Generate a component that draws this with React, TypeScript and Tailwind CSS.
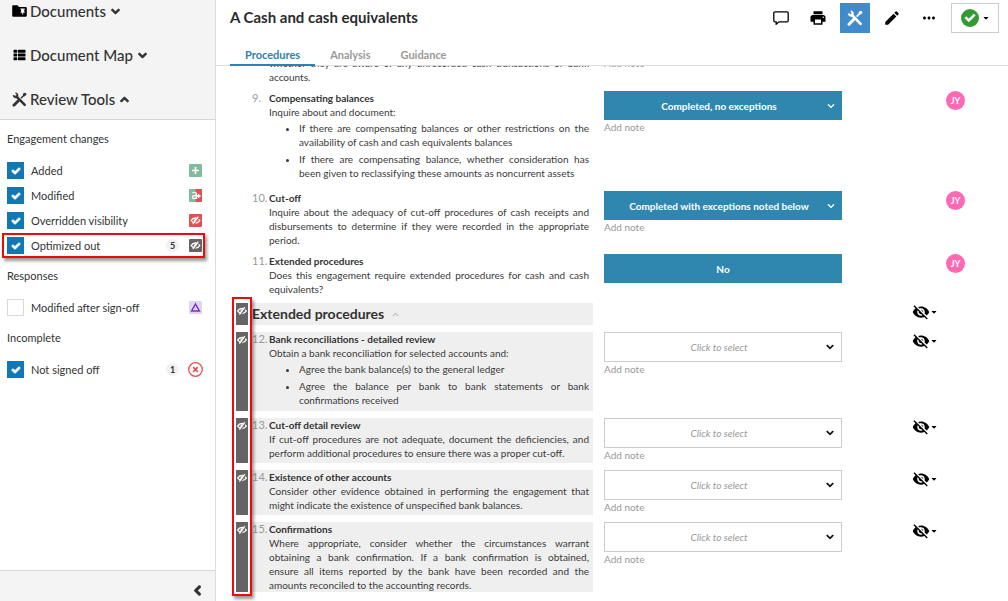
import React from "react";
import { FaCheck, FaChevronDown, FaChevronUp, FaChevronLeft, FaThList, FaCaretDown } from "react-icons/fa";
import { MdPrint, MdEdit, MdVisibilityOff, MdMoreHoriz } from "react-icons/md";

function ToolsIcon({ className }: { className?: string }) {
  return (
    <svg viewBox="0 0 16 16" className={className} fill="none" stroke="currentColor" aria-hidden="true">
      <path d="M4.6 4.6 L13.6 13.8" strokeWidth="2.6" strokeLinecap="round" />
      <path d="M1.6 3.4 A3 3 0 0 0 4.4 5.9 A2.6 2.6 0 0 0 5.9 3.2 A3 3 0 0 0 3.8 1.1" strokeWidth="1.8" />
      <path d="M14.8 1.4 L9.6 6.6" strokeWidth="1.6" />
      <path d="M15.2 2.4 L12.6 4.2 M13.4 1 L12 3.4" strokeWidth="1.4" />
      <path d="M6.8 9.4 L2 14.2" strokeWidth="3" strokeLinecap="round" />
    </svg>
  );
}

function FolderPinIcon({ className }: { className?: string }) {
  return (
    <svg viewBox="0 0 15 12" className={className} aria-hidden="true">
      <path d="M1.4 .3H5.600L7 1.900H13.600A1.200 1.200 0 0 1 14.800 3.100V10.500A1.200 1.200 0 0 1 13.600 11.700H1.400A1.200 1.200 0 0 1 .2 10.500V1.500A1.200 1.200 0 0 1 1.400 .3Z" fill="currentColor" />
      <path d="M8.400 3.400H12.800V4.400H12.300V6.800L13.200 7.800H11.200V9.600H10.200V7.800H8.200L9 6.800V4.400H8.400Z" fill="#f4f4f4" />
    </svg>
  );
}

function EyeSlashIcon({ className }: { className?: string }) {
  return (
    <svg viewBox="0 0 12 12" className={className} fill="none" aria-hidden="true">
      <path d="M1.700 6C2.700 4.300 4.200 3.500 6 3.500s3.300.8 4.300 2.500C9.300 7.700 7.800 8.500 6 8.500S2.700 7.700 1.700 6z" stroke="currentColor" strokeWidth="1.400" />
      <circle cx="6" cy="6" r="1.600" fill="currentColor" />
      <path d="M9.500 3 4.700 9.700" stroke="#646464" strokeWidth="1.300" />
      <path d="M8.800 2.200 3.400 9.700" stroke="currentColor" strokeWidth="1.200" />
    </svg>
  );
}

function Badge({ kind }: { kind: string }) {
  if (kind === "added")
    return (
      <svg viewBox="0 0 13 13" className="size-[13px]" aria-hidden="true">
        <rect width="13" height="13" rx="1" fill="#80bb9c" />
        <path d="M6.500 3v7M3 6.500h7" stroke="#fff" strokeWidth="1.700" />
      </svg>
    );
  if (kind === "modified")
    return (
      <svg viewBox="0 0 13 13" className="size-[13px]" aria-hidden="true">
        <rect width="13" height="13" rx="1" fill="#80bb9c" />
        <path d="M6.500 0H12a1 1 0 0 1 1 1v11a1 1 0 0 1-1 1H6.500z" fill="#e05252" />
        <path d="M3.400 4C4.600 3 7.400 3 7.400 5.200V10M7.400 6.600C5 6.400 3.400 7 3.400 8.300 3.400 10 6.400 10 7.400 8.400" stroke="#fff" strokeWidth="1.400" fill="none" />
        <path d="M7.400 7h4.200M9.600 5v4" stroke="#fff" strokeWidth="1.300" />
      </svg>
    );
  if (kind === "overridden" || kind === "optimized")
    return (
      <svg viewBox="0 0 13 13" className="size-[13px]" aria-hidden="true">
        <rect width="13" height="13" rx="1" fill={kind === "overridden" ? "#e05252" : "#646464"} />
        <path d="M2.200 6.500C3.200 4.800 4.700 4 6.500 4s3.300.8 4.300 2.500C9.800 8.200 8.300 9 6.500 9S3.200 8.200 2.200 6.500z" stroke="#fff" strokeWidth="1.400" fill="none" />
        <circle cx="6.500" cy="6.500" r="1.600" fill="#fff" />
        <path d="M10 3.500 5.200 10.200" stroke={kind === "overridden" ? "#e05252" : "#646464"} strokeWidth="1.300" />
        <path d="M9.300 2.700 3.900 10.200" stroke="#fff" strokeWidth="1.200" />
      </svg>
    );
  if (kind === "signoff")
    return (
      <svg viewBox="0 0 13 13" className="size-[13px]" aria-hidden="true">
        <rect width="13" height="13" rx="1" fill="#e3d3f4" />
        <path d="M6.500 3 10.400 10H2.600z" stroke="#7a35c0" strokeWidth="1.500" fill="none" />
      </svg>
    );
  return (
    <svg viewBox="0 0 15 15" className="-mx-px size-[15px]" fill="none" stroke="#e05252" aria-hidden="true">
      <circle cx="7.500" cy="7.500" r="6.800" strokeWidth="1.300" />
      <path d="M5.200 5.200l4.600 4.600M9.800 5.200 5.200 9.800" strokeWidth="1.700" />
    </svg>
  );
}

type Filter = { id: string; label: string; checked: boolean; count?: number; outlined?: boolean };

const filterGroups: { title: string; items: Filter[] }[] = [
  {
    title: "Engagement changes",
    items: [
      { id: "added", label: "Added", checked: true },
      { id: "modified", label: "Modified", checked: true },
      { id: "overridden", label: "Overridden visibility", checked: true },
      { id: "optimized", label: "Optimized out", checked: true, count: 5, outlined: true },
    ],
  },
  { title: "Responses", items: [{ id: "signoff", label: "Modified after sign-off", checked: false }] },
  { title: "Incomplete", items: [{ id: "unsigned", label: "Not signed off", checked: true, count: 1 }] },
];

function FilterRow({ item }: { item: Filter }) {
  return (
    <div className="relative flex h-[25px] items-center pr-[13px] pl-[7px]">
      <span className="grid size-[17px] place-items-center">
        <input
          id={item.id}
          type="checkbox"
          defaultChecked={item.checked}
          className="peer col-start-1 row-start-1 size-[17px] appearance-none border border-[#d9d9d9] bg-white checked:border-[#1079b5] checked:bg-[#1079b5]"
        />
        <FaCheck className="pointer-events-none z-10 col-start-1 row-start-1 hidden size-2 overflow-visible text-white [stroke-width:70] peer-checked:block" />
      </span>
      <label htmlFor={item.id} className="ml-[7px] flex-1">
        {item.label}
      </label>
      {item.count !== undefined && (
        <span className="mr-[10px] grid size-[13px] place-items-center rounded-full bg-[#f1f1f1] text-[9px] leading-none font-bold">
          {item.count}
        </span>
      )}
      <Badge kind={item.id} />
      {item.outlined && (
        <span className="pointer-events-none absolute inset-y-0 right-[10px] left-[2px] border-2 border-[#ee0a0a] shadow-[2px_3px_3px_rgba(0,0,0,0.4)]" />
      )}
    </div>
  );
}

function Sidebar() {
  return (
    <aside className="flex w-[216px] shrink-0 flex-col border-r border-[#dcdcdc] bg-white text-[#333]">
      <nav className="flex flex-col gap-[22px] border-b border-[#d6d6d6] bg-[#f4f4f4] pb-[9px] pl-3 text-[15px] font-medium">
        <button className="flex h-[22px] items-center">
          <FolderPinIcon className="mr-[3px] h-3 w-[15px] text-black" />
          Documents
          <FaChevronDown className="ml-[5px] size-[9px] overflow-visible [stroke-width:60]" />
        </button>
        <button className="flex h-[22px] items-center">
          <FaThList className="mr-[3px] h-3 w-[15px] text-black" />
          Document Map
          <FaChevronDown className="ml-[5px] size-[9px] overflow-visible [stroke-width:60]" />
        </button>
        <button className="flex h-[22px] items-center">
          <ToolsIcon className="mr-[3px] size-[15px]" />
          Review Tools
          <FaChevronUp className="ml-[5px] size-[9px] overflow-visible [stroke-width:60]" />
        </button>
      </nav>
      <div className="flex-1 pt-[10px] text-[11px] leading-[18px]">
        {filterGroups.map((g) => (
          <fieldset key={g.title} className="mb-[9px]">
            <legend className="mb-[10px] pl-[7px]">{g.title}</legend>
            {g.items.map((i) => (
              <FilterRow key={i.id} item={i} />
            ))}
          </fieldset>
        ))}
      </div>
      <div className="flex h-[31px] items-center justify-end border-t border-[#d6d6d6] bg-[#f4f4f4] pt-2 pr-3">
        <button aria-label="Collapse sidebar">
          <FaChevronLeft className="size-[11px] overflow-visible [stroke-width:60]" />
        </button>
      </div>
    </aside>
  );
}

function Header() {
  return (
    <header className="border-b border-[#dcdcdc] bg-white">
      <div className="flex h-[35px] items-center pr-[9px] pl-[14px]">
        <h1 className="flex-1 text-[15px] font-bold text-[#2b2b2b]">A Cash and cash equivalents</h1>
        <div className="flex items-center gap-[7px] text-black">
          <button aria-label="Comments" className="grid size-[30px] place-items-center">
            <svg viewBox="0 0 16 14" className="h-[14px] w-4" fill="none" stroke="currentColor" strokeWidth="1.300" aria-hidden="true">
              <path d="M2 .8h12c.7 0 1.200.5 1.200 1.200v7.600c0 .7-.5 1.200-1.200 1.200H6L3.200 13.200V10.800H2C1.300 10.800.8 10.300.8 9.600V2C.8 1.300 1.300.8 2 .8z" />
            </svg>
          </button>
          <button aria-label="Print" className="grid size-[30px] place-items-center">
            <MdPrint className="size-[18px]" />
          </button>
          <button aria-label="Review tools" className="grid size-[30px] place-items-center bg-[#428bca] text-white">
            <ToolsIcon className="size-4" />
          </button>
          <button aria-label="Edit" className="grid size-[30px] place-items-center">
            <MdEdit className="size-[18px]" />
          </button>
          <button aria-label="More" className="grid size-[30px] place-items-center">
            <MdMoreHoriz className="size-[18px]" />
          </button>
          <button aria-label="Sign off" className="flex h-[30px] w-12 items-center justify-center gap-[3px] border border-[#ccc]">
            <span className="grid size-[18px] place-items-center rounded-full bg-[#339933] text-white">
              <FaCheck className="size-[10px] overflow-visible [stroke-width:40]" />
            </span>
            <FaCaretDown className="size-2" />
          </button>
        </div>
      </div>
      <nav className="-mb-px flex pl-[14px] text-[11px] leading-4 font-bold text-[#999]">
        <a href="#procedures" className="border-b-2 border-[#3080b0] px-[15px] pt-3 pb-px text-[#3080b0]">Procedures</a>
        <a href="#analysis" className="px-[15px] pt-3">Analysis</a>
        <a href="#guidance" className="px-[15px] pt-3">Guidance</a>
      </nav>
    </header>
  );
}

type Procedure = {
  num?: string;
  title?: string;
  text: string;
  bullets?: string[];
  answer?: string;
  fixed?: boolean;
  signed?: boolean;
  hidden?: boolean;
};

const procedures: Procedure[] = [
  { text: "whether they are aware of any unrecorded cash transactions or bank accounts." },
  {
    num: "9.",
    title: "Compensating balances",
    text: "Inquire about and document:",
    bullets: [
      "If there are compensating balances or other restrictions on the availability of cash and cash equivalents balances",
      "If there are compensating balance, whether consideration has been given to reclassifying these amounts as noncurrent assets",
    ],
    answer: "Completed, no exceptions",
    signed: true,
  },
  {
    num: "10.",
    title: "Cut-off",
    text: "Inquire about the adequacy of cut-off procedures of cash receipts and disbursements to determine if they were recorded in the appropriate period.",
    answer: "Completed with exceptions noted below",
    signed: true,
  },
  {
    num: "11.",
    title: "Extended procedures",
    text: "Does this engagement require extended procedures for cash and cash equivalents?",
    answer: "No",
    fixed: true,
    signed: true,
  },
];

const extended: Procedure[] = [
  {
    num: "12.",
    title: "Bank reconciliations - detailed review",
    text: "Obtain a bank reconciliation for selected accounts and:",
    bullets: [
      "Agree the bank balance(s) to the general ledger",
      "Agree the balance per bank to bank statements or bank confirmations received",
    ],
    hidden: true,
  },
  {
    num: "13.",
    title: "Cut-off detail review",
    text: "If cut-off procedures are not adequate, document the deficiencies, and perform additional procedures to ensure there was a proper cut-off.",
    hidden: true,
  },
  {
    num: "14.",
    title: "Existence of other accounts",
    text: "Consider other evidence obtained in performing the engagement that might indicate the existence of unspecified bank balances.",
    hidden: true,
  },
  {
    num: "15.",
    title: "Confirmations",
    text: "Where appropriate, consider whether the circumstances warrant obtaining a bank confirmation. If a bank confirmation is obtained, ensure\u00a0all items reported by the bank have been recorded and the amounts\u00a0reconciled to the accounting records.",
    hidden: true,
  },
];

const rowGrid = "grid grid-cols-[15px_353fr_238fr_166fr]";

function HiddenBar() {
  return (
    <div className="mr-[3px] bg-[#646464] pt-0.5 text-white">
      <EyeSlashIcon className="size-3" />
    </div>
  );
}

function VisibilityButton() {
  return (
    <button aria-label="Change visibility" className="flex items-center self-start pl-[70px] text-black">
      <MdVisibilityOff className="size-[18px]" />
      <FaCaretDown className="size-2" />
    </button>
  );
}

function Answer({ p }: { p: Procedure }) {
  if (!p.num) return <button className="block leading-[15px] text-[#999]">Add note</button>;
  return (
    <div>
      {p.fixed ? (
        <button className="h-[29px] w-full bg-[#2f87b0] font-bold text-white">{p.answer}</button>
      ) : (
        <div className="grid items-center">
          <select
            aria-label={`Response to ${p.title}`}
            className={
              p.answer
                ? "col-start-1 row-start-1 h-[29px] w-full appearance-none bg-[#2f87b0] pr-6 pl-4 text-center font-bold text-white [text-align-last:center]"
                : "col-start-1 row-start-1 h-[30px] w-full appearance-none border border-[#ccc] bg-white pr-6 pl-4 text-center text-[#999] italic [text-align-last:center]"
            }
          >
            <option>{p.answer ?? "Click to select"}</option>
          </select>
          <FaChevronDown
            className={
              p.answer
                ? "pointer-events-none col-start-1 row-start-1 mr-[7px] size-2 justify-self-end text-white"
                : "pointer-events-none col-start-1 row-start-1 mr-2 size-2 justify-self-end overflow-visible text-black [stroke-width:30]"
            }
          />
        </div>
      )}
      {!p.fixed && <button className="block leading-[15px] text-[#999]">Add note</button>}
    </div>
  );
}

function Row({ p }: { p: Procedure }) {
  return (
    <li className={rowGrid}>
      {p.hidden ? <HiddenBar /> : <span />}
      <div className={p.hidden ? "mr-[11px] flex bg-[#efefef]" : "mr-[11px] flex"}>
        <span className="w-[18px] shrink-0 pl-px text-[11px] leading-[14px] text-[#999]">{p.num}</span>
        <div className="flex-1 pr-1 text-justify">
          {p.title && <h3 className="font-bold text-[#333]">{p.title}</h3>}
          <p>{p.text}</p>
          {p.bullets && (
            <ul className="mt-0.5 mb-1 flex list-disc flex-col gap-[3px] pl-[30px]">
              {p.bullets.map((b) => (
                <li key={b}>{b}</li>
              ))}
            </ul>
          )}
        </div>
      </div>
      <div>
        <Answer p={p} />
      </div>
      {p.hidden && <VisibilityButton />}
      {p.signed && (
        <span className="ml-[104px] grid size-[19px] place-items-center rounded-full bg-[#ff69b4] text-[9px] leading-none font-bold text-white">
          JY
        </span>
      )}
    </li>
  );
}

export default function App() {
  return (
    <div className="flex h-screen overflow-hidden bg-white font-[Lato,sans-serif]">
      <Sidebar />
      <div className="flex min-w-0 flex-1 flex-col">
        <Header />
        <main className="flex-1 overflow-hidden pl-5 text-[10px] leading-[14px] text-[#3a3a3a]">
          <ol className="-mt-[10px] mb-[7px] flex flex-col gap-[7px]">
            {procedures.map((p) => (
              <Row key={p.text} p={p} />
            ))}
          </ol>
          <section className="relative">
            <div className={rowGrid}>
              <HiddenBar />
              <h2 className="mr-[11px] flex h-[22px] items-center bg-[#efefef] pl-px text-[14px] font-bold text-[#333]">
                Extended procedures
                <FaChevronUp className="ml-2 size-[7px] text-[#bbb]" />
              </h2>
              <span />
              <VisibilityButton />
            </div>
            <ol className="mt-[7px] flex flex-col gap-[7px]">
              {extended.map((p) => (
                <Row key={p.num} p={p} />
              ))}
            </ol>
            <span className="pointer-events-none absolute -top-[6px] -bottom-1 -left-1 w-5 border-2 border-[#ee0a0a] shadow-[2px_3px_3px_rgba(0,0,0,0.4)]" />
          </section>
        </main>
      </div>
    </div>
  );
}
